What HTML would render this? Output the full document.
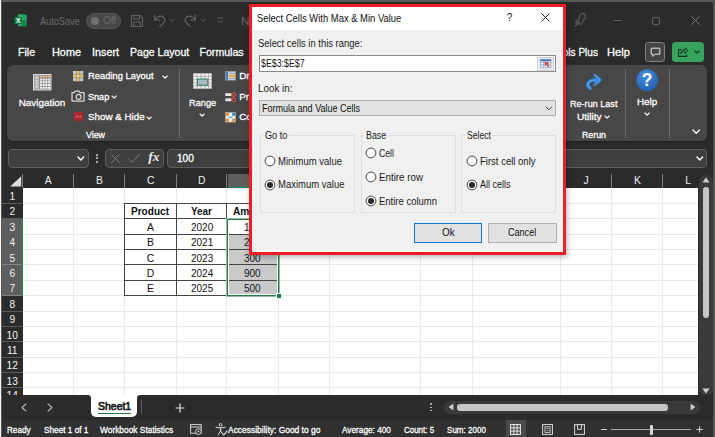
<!DOCTYPE html><html><head><meta charset="utf-8"><title>Select Cells With Max &amp; Min Value</title><style>html,body{margin:0;padding:0;}body{width:715px;height:437px;overflow:hidden;background:#2b2b2b;font-family:"Liberation Sans", sans-serif;position:relative;}div,svg,span{position:absolute;box-sizing:border-box;}.t{white-space:pre;transform-origin:0 50%;}.w{-webkit-text-stroke:.28px #fff;}svg{overflow:visible;}</style></head><body>
<div style="left:0px;top:0px;width:715px;height:2px;background:#5a5a5a;"></div>
<div style="left:713px;top:0px;width:2px;height:437px;background:#525252;"></div>
<div style="left:0px;top:0px;width:1px;height:437px;background:#f4f4f4;"></div>
<div style="left:1px;top:0px;width:1px;height:437px;background:#5a5a5a;"></div>
<svg style="left:13.8px;top:13.8px;" width="13.2" height="13.2" viewBox="0 0 15 15"><rect x="4.5" y="0.5" width="10" height="13.5" rx="1" fill="#21a366"/><rect x="4.5" y="0.5" width="5" height="6.8" fill="#33c481" opacity=".55"/><rect x="9.5" y="7.2" width="5" height="6.8" fill="#107c41" opacity=".8"/><rect x="0.5" y="3" width="8.5" height="8.5" rx="1" fill="#107c41"/><text x="4.75" y="10.1" font-family="Liberation Sans, sans-serif" font-weight="700" font-size="7.6" fill="#fff" text-anchor="middle">X</text></svg>
<span id="t0" class="t" style="left:40.30px;top:12.60px;line-height:16px;font-size:10.70px;color:#6c6c6c;transform:scaleX(0.8564);">AutoSave</span>
<div style="left:85.5px;top:12.5px;width:35px;height:16px;background:#484848;border:1px solid #565656;border-radius:8px;"></div>
<div style="left:90.5px;top:16.5px;width:8px;height:8px;background:#717171;border-radius:4px;"></div>
<span id="t1" class="t" style="left:103.00px;top:12.60px;line-height:16px;font-size:10.00px;color:#6a6a6a;transform:scaleX(0.9881);">Off</span>
<svg style="left:130px;top:13.5px;" width="14" height="14" viewBox="0 0 14 14"><path d="M1.5 1.5 H10.3 L12.5 3.7 V12.5 H1.5 Z" fill="none" stroke="#626262" stroke-width="1.1" stroke-linejoin="round"/><path d="M4 1.8 V5 H9.4 V1.8 M3.8 12.3 V8 H10.2 V12.3" fill="none" stroke="#626262" stroke-width="1.1"/></svg>
<svg style="left:152.5px;top:13px;" width="14" height="15" viewBox="0 0 14 15"><path d="M1.6 2 V7 H6.6" fill="none" stroke="#626262" stroke-width="1.2" stroke-linecap="round" stroke-linejoin="round"/><path d="M1.9 6.7 C4 3.2 8.2 2.2 10.6 4.3 C13 6.5 12.2 9.6 6.8 13.6" fill="none" stroke="#626262" stroke-width="1.2" stroke-linecap="round"/></svg>
<svg style="left:169.3px;top:18.05px;" width="6.4" height="4.3" viewBox="0 0 6.4 4.3"><path d="M1 1 L3.2 3.3 L5.4 1" fill="none" stroke="#626262" stroke-width="1" stroke-linecap="round" stroke-linejoin="round"/></svg>
<svg style="left:183px;top:13px;" width="14" height="15" viewBox="0 0 14 15"><path d="M12.4 2 V7 H7.4" fill="none" stroke="#626262" stroke-width="1.2" stroke-linecap="round" stroke-linejoin="round"/><path d="M12.1 6.7 C10 3.2 5.8 2.2 3.4 4.3 C1 6.5 1.8 9.6 7.2 13.6" fill="none" stroke="#626262" stroke-width="1.2" stroke-linecap="round"/></svg>
<svg style="left:200.3px;top:18.05px;" width="6.4" height="4.3" viewBox="0 0 6.4 4.3"><path d="M1 1 L3.2 3.3 L5.4 1" fill="none" stroke="#626262" stroke-width="1" stroke-linecap="round" stroke-linejoin="round"/></svg>
<svg style="left:216.5px;top:17px;" width="7" height="7" viewBox="0 0 7 7"><path d="M0.8 1 H6.2" stroke="#626262" stroke-width="1" stroke-linecap="round"/><path d="M1.4 3.6 L3.5 5.6 L5.6 3.6" fill="none" stroke="#626262" stroke-width="1" stroke-linecap="round" stroke-linejoin="round"/></svg>
<span id="t2" class="t" style="left:241.00px;top:12.60px;line-height:16px;font-size:10.70px;color:#6a6a6a;transform:scaleX(1.1012);">N</span>
<svg style="left:573px;top:12px;" width="15" height="16" viewBox="0 0 15 16"><path d="M9.3 1.6 C11 1.6 12.4 3 12.4 4.8 C12.4 6 11.8 7 10.8 7.6 L8.4 12 H5.6 L6.2 9 L3.6 11.6 L2.4 10.4 L6.4 6.4 C5.9 3.6 7 1.6 9.3 1.6 Z" fill="none" stroke="#5e5e5e" stroke-width="1.1" stroke-linejoin="round"/><path d="M2 14.2 L4.4 11.8" stroke="#5e5e5e" stroke-width="1.1" stroke-linecap="round"/></svg>
<div style="left:613.8px;top:19.5px;width:8.2px;height:1px;background:#626262;"></div>
<div style="left:652px;top:16.5px;width:8.4px;height:8.4px;border:1px solid #626262;border-radius:2px;"></div>
<svg style="left:690.5px;top:15.8px;" width="9" height="9" viewBox="0 0 9 9"><path d="M0.6 0.6 L8.4 8.4 M8.4 0.6 L0.6 8.4" stroke="#787878" stroke-width="1" stroke-linecap="round"/></svg>
<span id="t3" class="t w" style="left:18.40px;top:44.30px;line-height:16px;font-size:10.60px;color:#fff;transform:scaleX(0.9954);">File</span>
<span id="t4" class="t w" style="left:52.40px;top:44.30px;line-height:16px;font-size:10.60px;color:#fff;transform:scaleX(1.0260);">Home</span>
<span id="t5" class="t w" style="left:92.00px;top:44.30px;line-height:16px;font-size:10.60px;color:#fff;transform:scaleX(1.0189);">Insert</span>
<span id="t6" class="t w" style="left:129.70px;top:44.30px;line-height:16px;font-size:10.60px;color:#fff;transform:scaleX(0.9950);">Page Layout</span>
<span id="t7" class="t w" style="left:199.50px;top:44.30px;line-height:16px;font-size:10.60px;color:#fff;">Formulas</span>
<span id="t8" class="t w" style="left:542.00px;top:44.30px;line-height:16px;font-size:10.60px;color:#fff;transform:scaleX(0.9509);">Kutools Plus</span>
<span id="t9" class="t w" style="left:606.80px;top:44.30px;line-height:16px;font-size:10.60px;color:#fff;transform:scaleX(1.0460);">Help</span>
<div style="left:644.8px;top:42px;width:20.6px;height:19.5px;background:#454545;border:1px solid #858585;border-radius:3.5px;"></div>
<svg style="left:649.5px;top:46.5px;" width="11" height="11" viewBox="0 0 11 11"><path d="M1.2 1.2 H9.8 V7.2 H5 L2.8 9.4 V7.2 H1.2 Z" fill="none" stroke="#e6e6e6" stroke-width="1" stroke-linejoin="round"/></svg>
<div style="left:671.6px;top:42px;width:32.7px;height:19.5px;background:#37a35e;border-radius:3.5px;"></div>
<svg style="left:677px;top:46px;" width="12" height="12" viewBox="0 0 12 12"><path d="M4.4 3.6 H1.6 V10.4 H9.6 V8.4" fill="none" stroke="#16381f" stroke-width="1.1" stroke-linejoin="round"/><path d="M3.6 7.8 C4 5.2 5.6 4 8.2 3.9 V1.8 L11 4.6 L8.2 7.4 V5.6 C6.2 5.6 4.8 6.2 3.6 7.8 Z" fill="none" stroke="#16381f" stroke-width="1" stroke-linejoin="round"/></svg>
<svg style="left:694.1px;top:49.9px;" width="6.2" height="4.2" viewBox="0 0 6.2 4.2"><path d="M1 1 L3.1 3.2 L5.2 1" fill="none" stroke="#16381f" stroke-width="1.1" stroke-linecap="round" stroke-linejoin="round"/></svg>
<div style="left:7px;top:64.5px;width:700px;height:76.5px;background:#474747;border-radius:6px;box-shadow:0 1px 2px rgba(0,0,0,.35);"></div>
<svg style="left:33px;top:73.5px;" width="18.5" height="16.5" viewBox="0 0 18.5 16.5"><rect x="0.5" y="0.5" width="17.5" height="15.5" fill="#8e8e8e" stroke="#dedede" stroke-width="1"/><rect x="1.4" y="1.4" width="4.6" height="13.7" fill="#b4b4b4"/><path d="M3.7 3 v11" stroke="#f2f2f2" stroke-width="1.3" stroke-dasharray="1.5 1.5"/><path d="M7 2.6 H17" stroke="#f4b48a" stroke-width="2"/><path d="M7 5.6 H17 M7 8.3 H17 M7 11 H17 M7 13.7 H17" stroke="#f4f4f4" stroke-width="1.9"/><path d="M9.4 1.4 V15 M12 1.4 V15 M14.6 1.4 V15" stroke="#8e8e8e" stroke-width=".7"/></svg>
<span id="t10" class="t w" style="left:18.70px;top:94.80px;line-height:16px;font-size:9.90px;color:#fff;">Navigation</span>
<svg style="left:73.2px;top:71.4px;" width="10.2" height="10.2" viewBox="0 0 10.2 10.2"><rect x="0" y="0" width="10.2" height="10.2" fill="#c9c9c9"/><rect x="3.5" y="0" width="3.2" height="10.2" fill="#e9c35c"/><rect x="0" y="3.5" width="10.2" height="3.2" fill="#e9c35c"/><rect x="3.5" y="3.5" width="3.2" height="3.2" fill="#f6dc94"/><path d="M3.45 0 V10.2 M6.75 0 V10.2 M0 3.45 H10.2 M0 6.75 H10.2" stroke="#7e7e7e" stroke-width=".6"/></svg>
<span id="t11" class="t w" style="left:87.60px;top:68.40px;line-height:16px;font-size:9.90px;color:#fff;transform:scaleX(0.9481);">Reading Layout</span>
<svg style="left:162.4px;top:74.5px;" width="6.2" height="4.2" viewBox="0 0 6.2 4.2"><path d="M1 1 L3.1 3.2 L5.2 1" fill="none" stroke="#fff" stroke-width="1.1" stroke-linecap="round" stroke-linejoin="round"/></svg>
<svg style="left:71px;top:90.3px;" width="14" height="12" viewBox="0 0 14 12"><path d="M1 2.6 H3.2 L4.2 1 H8 L9 2.6 H13 V11 H1 Z" fill="none" stroke="#d9d9d9" stroke-width="1.25" stroke-linejoin="round"/><circle cx="7.6" cy="6.8" r="2.5" fill="none" stroke="#d9d9d9" stroke-width="1.2"/></svg>
<span id="t12" class="t w" style="left:87.60px;top:88.60px;line-height:16px;font-size:9.90px;color:#fff;transform:scaleX(0.9186);">Snap</span>
<svg style="left:110.8px;top:94.7px;" width="6.2" height="4.2" viewBox="0 0 6.2 4.2"><path d="M1 1 L3.1 3.2 L5.2 1" fill="none" stroke="#fff" stroke-width="1.1" stroke-linecap="round" stroke-linejoin="round"/></svg>
<svg style="left:73.7px;top:112.4px;" width="9" height="9" viewBox="0 0 9 9"><rect x="0" y="0" width="9" height="9" rx="1.5" fill="#ac2630"/><path d="M1.7 4.5 h1.4 M3.8 4.5 h1.4 M5.9 4.5 h1.4" stroke="#de7f86" stroke-width="1.5"/></svg>
<span id="t13" class="t w" style="left:87.60px;top:109.40px;line-height:16px;font-size:9.90px;color:#fff;transform:scaleX(0.9914);">Show &amp; Hide</span>
<svg style="left:146.1px;top:115.5px;" width="6.2" height="4.2" viewBox="0 0 6.2 4.2"><path d="M1 1 L3.1 3.2 L5.2 1" fill="none" stroke="#fff" stroke-width="1.1" stroke-linecap="round" stroke-linejoin="round"/></svg>
<span id="t14" class="t w" style="left:85.50px;top:127.00px;line-height:16px;font-size:9.60px;color:#fff;transform:scaleX(0.9212);">View</span>
<div style="left:179px;top:69px;width:1px;height:68.5px;background:#6a6a6a;"></div>
<svg style="left:193px;top:73.3px;" width="19" height="16" viewBox="0 0 19 16"><rect x="0.4" y="0.4" width="18.2" height="15.2" fill="#f4f4f4" stroke="#b5b5b5" stroke-width=".7"/><path d="M4 0.4 V15.6 M8 0.4 V15.6 M12 0.4 V15.6 M15.6 0.4 V15.6 M0.4 3.4 H18.6 M0.4 6.6 H18.6 M0.4 9.8 H18.6 M0.4 12.8 H18.6" stroke="#a2a2a2" stroke-width=".8"/><rect x="4.4" y="6" width="10.4" height="6.2" fill="#a9bccd" stroke="#2e7d4f" stroke-width="1"/></svg>
<span id="t15" class="t w" style="left:189.00px;top:94.80px;line-height:16px;font-size:9.90px;color:#fff;transform:scaleX(0.9344);">Range</span>
<svg style="left:199.3px;top:112.5px;" width="6.2" height="4.2" viewBox="0 0 6.2 4.2"><path d="M1 1 L3.1 3.2 L5.2 1" fill="none" stroke="#fff" stroke-width="1.1" stroke-linecap="round" stroke-linejoin="round"/></svg>
<svg style="left:224.5px;top:71px;" width="11" height="9.5" viewBox="0 0 11 9.5"><rect x="0.4" y="0.4" width="10.2" height="8.7" fill="#dfe6ee" stroke="#9a9a9a" stroke-width=".7"/><rect x="0.8" y="0.8" width="2.4" height="7.9" fill="#3d78b8"/><rect x="4" y="3.6" width="6.2" height="2.4" fill="#e7a43a"/><path d="M4 2.2 h6 M4 7.4 h6" stroke="#6f7f92" stroke-width=".8"/></svg>
<span id="t16" class="t w" style="left:239.20px;top:67.80px;line-height:16px;font-size:9.90px;color:#fff;">Dr</span>
<svg style="left:224.5px;top:91.5px;" width="11" height="10.5" viewBox="0 0 11 10.5"><rect x="0.3" y="1.2" width="6.2" height="2.8" fill="#e9e9e9"/><rect x="0.3" y="6.4" width="6.2" height="2.8" fill="#e9e9e9"/><circle cx="8.6" cy="2.6" r="1.9" fill="none" stroke="#e0543e" stroke-width="1.1"/><circle cx="8.6" cy="7.8" r="1.9" fill="none" stroke="#e0543e" stroke-width="1.1"/></svg>
<span id="t17" class="t w" style="left:239.20px;top:88.80px;line-height:16px;font-size:9.90px;color:#fff;">Pr</span>
<svg style="left:224.5px;top:111.5px;" width="11" height="10.5" viewBox="0 0 11 10.5"><rect x="0.4" y="0.4" width="10.2" height="9.7" fill="#eef1f5" stroke="#a0a0a0" stroke-width=".6"/><rect x="0.8" y="0.8" width="3" height="3" fill="#e9892f"/><rect x="0.8" y="6.7" width="3" height="3" fill="#e9892f"/><rect x="7.2" y="0.8" width="3" height="3" fill="#3f7fc4"/><rect x="7.2" y="6.7" width="3" height="3" fill="#e9892f"/><path d="M3.6 5.2 H7.6" stroke="#3f7fc4" stroke-width="1"/></svg>
<span id="t18" class="t w" style="left:239.20px;top:108.80px;line-height:16px;font-size:9.90px;color:#fff;">Co</span>
<svg style="left:584px;top:72.5px;" width="19" height="18" viewBox="0 0 19 18"><path d="M6.4 15.4 C1.6 12.6 3.2 6.8 12.6 7" fill="none" stroke="#2f7fdc" stroke-width="3.3" stroke-linecap="round"/><path d="M10.8 2.4 L16.2 7 L10.8 11.4" fill="none" stroke="#2f7fdc" stroke-width="3.1" stroke-linecap="round" stroke-linejoin="round"/><path d="M6.4 15.4 C1.6 12.6 3.2 6.8 12.6 7" fill="none" stroke="#6aa7ea" stroke-width="1.1" stroke-linecap="round"/><path d="M10.8 2.4 L16.2 7 L10.8 11.4" fill="none" stroke="#6aa7ea" stroke-width="1" stroke-linecap="round" stroke-linejoin="round"/></svg>
<span id="t19" class="t w" style="left:569.90px;top:96.30px;line-height:16px;font-size:9.90px;color:#fff;transform:scaleX(0.9187);">Re-run Last</span>
<span id="t20" class="t w" style="left:577.20px;top:109.00px;line-height:16px;font-size:9.90px;color:#fff;transform:scaleX(1.0190);">Utility</span>
<svg style="left:604.2px;top:114.5px;" width="6.2" height="4.2" viewBox="0 0 6.2 4.2"><path d="M1 1 L3.1 3.2 L5.2 1" fill="none" stroke="#fff" stroke-width="1.1" stroke-linecap="round" stroke-linejoin="round"/></svg>
<span id="t21" class="t w" style="left:581.50px;top:127.00px;line-height:16px;font-size:9.60px;color:#fff;transform:scaleX(0.9181);">Rerun</span>
<div style="left:625px;top:69px;width:1px;height:68.5px;background:#6a6a6a;"></div>
<svg style="left:636px;top:69.3px;" width="22.4" height="22.4" viewBox="0 0 22.4 22.4"><defs><radialGradient id="hg" cx="40%" cy="30%" r="75%"><stop offset="0" stop-color="#4a8fdc"/><stop offset="1" stop-color="#1d5fae"/></radialGradient></defs><circle cx="11.2" cy="11.2" r="10.9" fill="url(#hg)"/><text x="11.2" y="17.4" font-family="Liberation Sans, sans-serif" font-weight="700" font-size="17.5" fill="#fff" text-anchor="middle">?</text></svg>
<span id="t22" class="t w" style="left:637.20px;top:93.80px;line-height:16px;font-size:9.90px;color:#fff;transform:scaleX(0.9945);">Help</span>
<svg style="left:644.1px;top:111.5px;" width="6.2" height="4.2" viewBox="0 0 6.2 4.2"><path d="M1 1 L3.1 3.2 L5.2 1" fill="none" stroke="#fff" stroke-width="1.1" stroke-linecap="round" stroke-linejoin="round"/></svg>
<div style="left:669px;top:69px;width:1px;height:68.5px;background:#6a6a6a;"></div>
<svg style="left:692.2px;top:129.0px;" width="8.4" height="5.2" viewBox="0 0 8.4 5.2"><path d="M1 1 L4.2 4.2 L7.4 1" fill="none" stroke="#fff" stroke-width="1.3" stroke-linecap="round" stroke-linejoin="round"/></svg>
<div style="left:7.5px;top:148.5px;width:81.5px;height:19.5px;background:#3f3f3f;border:1px solid #5f5f5f;border-radius:4px;"></div>
<svg style="left:76.8px;top:156.1px;" width="7.6" height="5" viewBox="0 0 7.6 5"><path d="M1 1 L3.8 4 L6.6 1" fill="none" stroke="#fff" stroke-width="1.4" stroke-linecap="round" stroke-linejoin="round"/></svg>
<div style="left:96px;top:153.6px;width:2px;height:2px;background:#dadada;border-radius:1px;"></div>
<div style="left:96px;top:157.4px;width:2px;height:2px;background:#dadada;border-radius:1px;"></div>
<div style="left:96px;top:161.2px;width:2px;height:2px;background:#dadada;border-radius:1px;"></div>
<div style="left:104.5px;top:148.5px;width:59.5px;height:19.5px;background:#3f3f3f;border:1px solid #5f5f5f;border-radius:4px;"></div>
<svg style="left:110.5px;top:153.5px;" width="9" height="9" viewBox="0 0 9 9"><path d="M0.6 0.6 L8.4 8.4 M8.4 0.6 L0.6 8.4" stroke="#7c7c7c" stroke-width="1" stroke-linecap="round"/></svg>
<svg style="left:128px;top:153.5px;" width="12" height="9" viewBox="0 0 12 9"><path d="M0.8 5 L4 8.2 L11.2 0.8" fill="none" stroke="#7c7c7c" stroke-width="1" stroke-linecap="round" stroke-linejoin="round"/></svg>
<span id="t23" class="t" style="left:148.30px;top:149.20px;line-height:16px;font-size:13.50px;color:#ececec;font-family:'Liberation Serif', serif;font-style:italic;font-weight:700;">fx</span>
<div style="left:167px;top:148.5px;width:539.5px;height:19.5px;background:#3f3f3f;border:1px solid #5f5f5f;border-radius:4px;"></div>
<span id="t24" class="t w" style="left:176.60px;top:151.40px;line-height:16px;font-size:10.20px;color:#fff;transform:scaleX(0.9882);">100</span>
<svg style="left:696.0px;top:155.9px;" width="7.6" height="5" viewBox="0 0 7.6 5"><path d="M1 1 L3.8 4 L6.6 1" fill="none" stroke="#fff" stroke-width="1.4" stroke-linecap="round" stroke-linejoin="round"/></svg>
<div style="left:2px;top:173.5px;width:695.5px;height:222.5px;background:#ffffff;"></div>
<div style="left:2px;top:173.5px;width:695.5px;height:14.5px;background:#2b2b2b;"></div>
<div style="left:2px;top:173.5px;width:20.5px;height:222.5px;background:#2b2b2b;"></div>
<div style="left:73px;top:188px;width:1px;height:208px;background:#eaeaea;"></div>
<div style="left:124px;top:188px;width:1px;height:208px;background:#eaeaea;"></div>
<div style="left:176px;top:188px;width:1px;height:208px;background:#eaeaea;"></div>
<div style="left:226px;top:188px;width:1px;height:208px;background:#eaeaea;"></div>
<div style="left:278px;top:188px;width:1px;height:208px;background:#eaeaea;"></div>
<div style="left:329px;top:188px;width:1px;height:208px;background:#eaeaea;"></div>
<div style="left:420px;top:188px;width:1px;height:208px;background:#eaeaea;"></div>
<div style="left:472px;top:188px;width:1px;height:208px;background:#eaeaea;"></div>
<div style="left:560px;top:188px;width:1px;height:208px;background:#eaeaea;"></div>
<div style="left:611px;top:188px;width:1px;height:208px;background:#eaeaea;"></div>
<div style="left:662px;top:188px;width:1px;height:208px;background:#eaeaea;"></div>
<div style="left:22.5px;top:203px;width:675px;height:1px;background:#eaeaea;"></div>
<div style="left:22.5px;top:218px;width:675px;height:1px;background:#eaeaea;"></div>
<div style="left:22.5px;top:234px;width:675px;height:1px;background:#eaeaea;"></div>
<div style="left:22.5px;top:249px;width:675px;height:1px;background:#eaeaea;"></div>
<div style="left:22.5px;top:264px;width:675px;height:1px;background:#eaeaea;"></div>
<div style="left:22.5px;top:280px;width:675px;height:1px;background:#eaeaea;"></div>
<div style="left:22.5px;top:295px;width:675px;height:1px;background:#eaeaea;"></div>
<div style="left:22.5px;top:311px;width:675px;height:1px;background:#eaeaea;"></div>
<div style="left:22.5px;top:326px;width:675px;height:1px;background:#eaeaea;"></div>
<div style="left:22.5px;top:341px;width:675px;height:1px;background:#eaeaea;"></div>
<div style="left:22.5px;top:357px;width:675px;height:1px;background:#eaeaea;"></div>
<div style="left:22.5px;top:372px;width:675px;height:1px;background:#eaeaea;"></div>
<div style="left:22.5px;top:387px;width:675px;height:1px;background:#eaeaea;"></div>
<div style="left:73px;top:174px;width:1px;height:14px;background:#7c7c7c;"></div>
<div style="left:124px;top:174px;width:1px;height:14px;background:#7c7c7c;"></div>
<div style="left:176px;top:174px;width:1px;height:14px;background:#7c7c7c;"></div>
<div style="left:226px;top:174px;width:1px;height:14px;background:#7c7c7c;"></div>
<div style="left:278px;top:174px;width:1px;height:14px;background:#7c7c7c;"></div>
<div style="left:329px;top:174px;width:1px;height:14px;background:#7c7c7c;"></div>
<div style="left:420px;top:174px;width:1px;height:14px;background:#7c7c7c;"></div>
<div style="left:472px;top:174px;width:1px;height:14px;background:#7c7c7c;"></div>
<div style="left:560px;top:174px;width:1px;height:14px;background:#7c7c7c;"></div>
<div style="left:611px;top:174px;width:1px;height:14px;background:#7c7c7c;"></div>
<div style="left:662px;top:174px;width:1px;height:14px;background:#7c7c7c;"></div>
<div style="left:22px;top:174px;width:1px;height:14px;background:#7c7c7c;"></div>
<span id="t25" class="t" style="left:44.80px;top:173.20px;line-height:16px;font-size:10.40px;color:#f0f0f0;width:6.8px;text-align:center;">A</span>
<span id="t26" class="t" style="left:96.00px;top:173.20px;line-height:16px;font-size:10.40px;color:#f0f0f0;width:6.8px;text-align:center;">B</span>
<span id="t27" class="t" style="left:147.00px;top:173.20px;line-height:16px;font-size:10.40px;color:#f0f0f0;width:6.8px;text-align:center;">C</span>
<span id="t28" class="t" style="left:198.10px;top:173.20px;line-height:16px;font-size:10.40px;color:#f0f0f0;width:6.8px;text-align:center;">D</span>
<span id="t29" class="t" style="left:582.80px;top:173.20px;line-height:16px;font-size:10.40px;color:#f0f0f0;width:6.8px;text-align:center;">J</span>
<span id="t30" class="t" style="left:634.00px;top:173.20px;line-height:16px;font-size:10.40px;color:#f0f0f0;width:6.8px;text-align:center;">K</span>
<span id="t31" class="t" style="left:684.80px;top:173.20px;line-height:16px;font-size:10.40px;color:#f0f0f0;width:6.8px;text-align:center;">L</span>
<div style="left:227.5px;top:173.5px;width:51px;height:14.5px;background:#5e5e5e;"></div>
<div style="left:227.5px;top:187px;width:51px;height:1px;background:#1e8a4c;"></div>
<svg style="left:10px;top:176px;" width="11.4" height="10.6" viewBox="0 0 11.4 10.6"><path d="M11.2 0.2 V10.4 H0.2 Z" fill="#dedede"/></svg>
<div style="left:2px;top:203px;width:20.5px;height:1px;background:#5a5a5a;"></div>
<span id="t32" class="t" style="left:9.40px;top:189.00px;line-height:16px;font-size:10.20px;color:#f4f4f4;width:5.6px;text-align:center;">1</span>
<div style="left:2px;top:218px;width:20.5px;height:1px;background:#5a5a5a;"></div>
<span id="t33" class="t" style="left:9.40px;top:204.39px;line-height:16px;font-size:10.20px;color:#f4f4f4;width:5.6px;text-align:center;">2</span>
<div style="left:2px;top:219px;width:20.5px;height:15px;background:#5e5e5e;"></div>
<div style="left:2px;top:234px;width:20.5px;height:1px;background:#858585;"></div>
<span id="t34" class="t" style="left:9.40px;top:219.78px;line-height:16px;font-size:10.20px;color:#f4f4f4;width:5.6px;text-align:center;">3</span>
<div style="left:2px;top:234px;width:20.5px;height:15px;background:#5e5e5e;"></div>
<div style="left:2px;top:249px;width:20.5px;height:1px;background:#858585;"></div>
<span id="t35" class="t" style="left:9.40px;top:235.16px;line-height:16px;font-size:10.20px;color:#f4f4f4;width:5.6px;text-align:center;">4</span>
<div style="left:2px;top:249px;width:20.5px;height:16px;background:#5e5e5e;"></div>
<div style="left:2px;top:264px;width:20.5px;height:1px;background:#858585;"></div>
<span id="t36" class="t" style="left:9.40px;top:250.56px;line-height:16px;font-size:10.20px;color:#f4f4f4;width:5.6px;text-align:center;">5</span>
<div style="left:2px;top:265px;width:20.5px;height:15px;background:#5e5e5e;"></div>
<div style="left:2px;top:280px;width:20.5px;height:1px;background:#858585;"></div>
<span id="t37" class="t" style="left:9.40px;top:265.94px;line-height:16px;font-size:10.20px;color:#f4f4f4;width:5.6px;text-align:center;">6</span>
<div style="left:2px;top:280px;width:20.5px;height:16px;background:#5e5e5e;"></div>
<div style="left:2px;top:295px;width:20.5px;height:1px;background:#858585;"></div>
<span id="t38" class="t" style="left:9.40px;top:281.33px;line-height:16px;font-size:10.20px;color:#f4f4f4;width:5.6px;text-align:center;">7</span>
<div style="left:2px;top:311px;width:20.5px;height:1px;background:#5a5a5a;"></div>
<span id="t39" class="t" style="left:9.40px;top:296.72px;line-height:16px;font-size:10.20px;color:#f4f4f4;width:5.6px;text-align:center;">8</span>
<div style="left:2px;top:326px;width:20.5px;height:1px;background:#5a5a5a;"></div>
<span id="t40" class="t" style="left:9.40px;top:312.11px;line-height:16px;font-size:10.20px;color:#f4f4f4;width:5.6px;text-align:center;">9</span>
<div style="left:2px;top:341px;width:20.5px;height:1px;background:#5a5a5a;"></div>
<span id="t41" class="t" style="left:6.60px;top:327.50px;line-height:16px;font-size:10.20px;color:#f4f4f4;width:11.2px;text-align:center;">10</span>
<div style="left:2px;top:357px;width:20.5px;height:1px;background:#5a5a5a;"></div>
<span id="t42" class="t" style="left:6.60px;top:342.89px;line-height:16px;font-size:10.20px;color:#f4f4f4;width:11.2px;text-align:center;">11</span>
<div style="left:2px;top:372px;width:20.5px;height:1px;background:#5a5a5a;"></div>
<span id="t43" class="t" style="left:6.60px;top:358.29px;line-height:16px;font-size:10.20px;color:#f4f4f4;width:11.2px;text-align:center;">12</span>
<div style="left:2px;top:387px;width:20.5px;height:1px;background:#5a5a5a;"></div>
<span id="t44" class="t" style="left:6.60px;top:373.68px;line-height:16px;font-size:10.20px;color:#f4f4f4;width:11.2px;text-align:center;">13</span>
<div style="left:2px;top:388.97px;width:20.5px;height:6.53px;overflow:hidden;"><span class="t" style="left:4.6px;top:-1.2px;line-height:16px;font-size:10.2px;color:#f4f4f4;">14</span></div>
<div style="left:22px;top:219px;width:1px;height:77px;background:#1e8a4c;"></div>
<div style="left:229px;top:235px;width:48px;height:59px;background:#c9c9c9;"></div>
<div style="left:124px;top:203px;width:155px;height:1px;background:#444444;"></div>
<div style="left:124px;top:218px;width:155px;height:1px;background:#444444;"></div>
<div style="left:124px;top:234px;width:155px;height:1px;background:#444444;"></div>
<div style="left:124px;top:249px;width:155px;height:1px;background:#444444;"></div>
<div style="left:124px;top:264px;width:155px;height:1px;background:#444444;"></div>
<div style="left:124px;top:280px;width:155px;height:1px;background:#444444;"></div>
<div style="left:124px;top:295px;width:155px;height:1px;background:#444444;"></div>
<div style="left:124px;top:203px;width:1px;height:93px;background:#444444;"></div>
<div style="left:176px;top:203px;width:1px;height:93px;background:#444444;"></div>
<div style="left:226px;top:203px;width:1px;height:93px;background:#444444;"></div>
<div style="left:278px;top:203px;width:1px;height:93px;background:#444444;"></div>
<div style="left:226px;top:218px;width:1px;height:79px;background:#fff;"></div>
<div style="left:226px;top:218px;width:54px;height:1px;background:#fff;"></div>
<div style="left:226px;top:218px;width:54px;height:79px;border:1px solid rgba(31,122,69,.5);"></div>
<div style="left:227px;top:219px;width:52px;height:77px;border:1px solid #1f7a45;"></div>
<div style="left:228px;top:220px;width:50px;height:75px;border:1px solid #fff;border-top:0;"></div>
<div style="left:276px;top:293px;width:5px;height:5px;background:#fff;"></div>
<div style="left:277px;top:294px;width:4px;height:4px;background:#1f7a45;"></div>
<span id="t45" class="t" style="left:131.40px;top:204.39px;line-height:16px;font-size:10.40px;color:#111;font-weight:700;transform:scaleX(0.9678);">Product</span>
<span id="t46" class="t" style="left:191.10px;top:204.39px;line-height:16px;font-size:10.40px;color:#111;font-weight:700;transform:scaleX(0.9559);">Year</span>
<span id="t47" class="t" style="left:233.35px;top:204.39px;line-height:16px;font-size:10.40px;color:#111;font-weight:700;transform:scaleX(0.9809);">Amount</span>
<span id="t48" class="t" style="left:146.40px;top:219.78px;line-height:16px;font-size:10.40px;color:#111;width:8px;text-align:center;">A</span>
<span id="t49" class="t" style="left:190.50px;top:219.78px;line-height:16px;font-size:10.20px;color:#111;transform:scaleX(0.9792);">2020</span>
<span id="t50" class="t" style="left:244.28px;top:219.78px;line-height:16px;font-size:10.20px;color:#111;transform:scaleX(0.9794);">100</span>
<span id="t51" class="t" style="left:146.40px;top:235.16px;line-height:16px;font-size:10.40px;color:#111;width:8px;text-align:center;">B</span>
<span id="t52" class="t" style="left:190.50px;top:235.16px;line-height:16px;font-size:10.20px;color:#111;transform:scaleX(0.9792);">2021</span>
<span id="t53" class="t" style="left:244.28px;top:235.16px;line-height:16px;font-size:10.20px;color:#111;transform:scaleX(0.9794);">200</span>
<span id="t54" class="t" style="left:146.40px;top:250.56px;line-height:16px;font-size:10.40px;color:#111;width:8px;text-align:center;">C</span>
<span id="t55" class="t" style="left:190.50px;top:250.56px;line-height:16px;font-size:10.20px;color:#111;transform:scaleX(0.9792);">2023</span>
<span id="t56" class="t" style="left:244.28px;top:250.56px;line-height:16px;font-size:10.20px;color:#111;transform:scaleX(0.9794);">300</span>
<span id="t57" class="t" style="left:146.40px;top:265.94px;line-height:16px;font-size:10.40px;color:#111;width:8px;text-align:center;">D</span>
<span id="t58" class="t" style="left:190.50px;top:265.94px;line-height:16px;font-size:10.20px;color:#111;transform:scaleX(0.9792);">2024</span>
<span id="t59" class="t" style="left:244.28px;top:265.94px;line-height:16px;font-size:10.20px;color:#111;transform:scaleX(0.9794);">900</span>
<span id="t60" class="t" style="left:146.40px;top:281.33px;line-height:16px;font-size:10.40px;color:#111;width:8px;text-align:center;">E</span>
<span id="t61" class="t" style="left:190.50px;top:281.33px;line-height:16px;font-size:10.20px;color:#111;transform:scaleX(0.9792);">2025</span>
<span id="t62" class="t" style="left:244.28px;top:281.33px;line-height:16px;font-size:10.20px;color:#111;transform:scaleX(0.9794);">500</span>
<div style="left:697.5px;top:173.5px;width:15.5px;height:222.5px;background:#2b2b2b;"></div>
<div style="left:699px;top:174.5px;width:13.5px;height:221.5px;background:#3a3a3a;border-radius:7px;"></div>
<svg style="left:701.5px;top:177px;" width="8" height="6" viewBox="0 0 8 6"><path d="M4 0.6 L7.6 5.4 H0.4 Z" fill="#cfcfcf"/></svg>
<div style="left:702.5px;top:187px;width:6px;height:131px;background:#c6c6c6;border-radius:3px;"></div>
<svg style="left:701.5px;top:388px;" width="8" height="6" viewBox="0 0 8 6"><path d="M4 5.4 L7.6 0.6 H0.4 Z" fill="#cfcfcf"/></svg>
<div style="left:2px;top:395px;width:711px;height:25.5px;background:#2b2b2b;"></div>
<div style="left:2px;top:420px;width:711px;height:17px;background:#313131;"></div>
<svg style="left:20.5px;top:402.8px;" width="6" height="9" viewBox="0 0 6 9"><path d="M5 0.8 L1 4.5 L5 8.2" fill="none" stroke="#bdbdbd" stroke-width="1.1" stroke-linecap="round" stroke-linejoin="round"/></svg>
<svg style="left:47px;top:402.8px;" width="6" height="9" viewBox="0 0 6 9"><path d="M1 0.8 L5 4.5 L1 8.2" fill="none" stroke="#bdbdbd" stroke-width="1.1" stroke-linecap="round" stroke-linejoin="round"/></svg>
<div style="left:91.3px;top:395px;width:45.7px;height:22px;background:#ffffff;border-radius:0 0 5px 5px;"></div>
<svg style="left:88.3px;top:395px;" width="3" height="3" viewBox="0 0 3 3"><path d="M0 0 H3 V3 C3 1.2 1.8 0 0 0 Z" fill="#fff"/></svg>
<svg style="left:137px;top:395px;" width="3" height="3" viewBox="0 0 3 3"><path d="M3 0 H0 V3 C0 1.2 1.2 0 3 0 Z" fill="#fff"/></svg>
<span id="t63" class="t" style="left:97.80px;top:397.80px;line-height:16px;font-size:11.40px;color:#1a1a1a;transform:scaleX(0.9194);-webkit-text-stroke:.7px #1a1a1a;">Sheet1</span>
<div style="left:98px;top:412.5px;width:33px;height:1.3px;background:#1c7c44;"></div>
<div style="left:141px;top:400px;width:1px;height:14px;background:#626262;"></div>
<svg style="left:174.5px;top:402.5px;" width="10" height="10" viewBox="0 0 10 10"><path d="M5 0.6 V9.4 M0.6 5 H9.4" stroke="#e2e2e2" stroke-width="1.2"/></svg>
<div style="left:430px;top:403.4px;width:1.6px;height:1.6px;background:#d0d0d0;border-radius:1px;"></div>
<div style="left:430px;top:406.6px;width:1.6px;height:1.6px;background:#d0d0d0;border-radius:1px;"></div>
<div style="left:430px;top:409.8px;width:1.6px;height:1.6px;background:#d0d0d0;border-radius:1px;"></div>
<div style="left:444px;top:400.5px;width:256px;height:13.5px;background:#393939;border-radius:7px;"></div>
<svg style="left:447.5px;top:403px;" width="6" height="8" viewBox="0 0 6 8"><path d="M0.6 4 L5.4 0.4 V7.6 Z" fill="#cfcfcf"/></svg>
<svg style="left:689.5px;top:403px;" width="6" height="8" viewBox="0 0 6 8"><path d="M5.4 4 L0.6 0.4 V7.6 Z" fill="#cfcfcf"/></svg>
<div style="left:457px;top:404px;width:210.5px;height:6.5px;background:#c6c6c6;border-radius:3.2px;"></div>
<span id="t64" class="t w" style="left:7.40px;top:421.70px;line-height:16px;font-size:9.00px;color:#fff;transform:scaleX(0.9033);">Ready</span>
<span id="t65" class="t w" style="left:43.60px;top:421.70px;line-height:16px;font-size:9.00px;color:#fff;transform:scaleX(0.9146);">Sheet 1 of 1</span>
<span id="t66" class="t w" style="left:100.00px;top:421.70px;line-height:16px;font-size:9.00px;color:#fff;transform:scaleX(0.9293);">Workbook Statistics</span>
<svg style="left:189.5px;top:424px;" width="12.5" height="11.5" viewBox="0 0 12.5 11.5"><rect x="0.6" y="0.6" width="10.6" height="8.6" fill="none" stroke="#d6d6d6" stroke-width="1"/><path d="M0.6 3 H11.2" stroke="#d6d6d6" stroke-width="1"/><circle cx="8.4" cy="7.6" r="2.9" fill="#313131" stroke="#d6d6d6" stroke-width="1"/><circle cx="8.4" cy="7.6" r="1" fill="#d6d6d6"/></svg>
<svg style="left:214.5px;top:423.3px;" width="12.5" height="12.5" viewBox="0 0 12.5 12.5"><circle cx="5.6" cy="1.8" r="1.3" fill="none" stroke="#e4e4e4" stroke-width=".9"/><path d="M1 4.2 C4 5.2 7.2 5.2 10.2 4.2 M5.6 5 V8 M5.6 8 L3 11.8 M5.6 8 L6.6 9.6" fill="none" stroke="#e4e4e4" stroke-width="1" stroke-linecap="round"/><path d="M7.2 10.2 L8.8 11.8 L12 8" fill="none" stroke="#e4e4e4" stroke-width="1.1" stroke-linecap="round" stroke-linejoin="round"/></svg>
<span id="t67" class="t w" style="left:228.00px;top:421.70px;line-height:16px;font-size:9.00px;color:#fff;transform:scaleX(0.9375);">Accessibility: Good to go</span>
<span id="t68" class="t w" style="left:342.00px;top:421.70px;line-height:16px;font-size:9.00px;color:#fff;transform:scaleX(0.9159);">Average: 400</span>
<span id="t69" class="t w" style="left:404.40px;top:421.70px;line-height:16px;font-size:9.00px;color:#fff;transform:scaleX(0.8845);">Count: 5</span>
<span id="t70" class="t w" style="left:447.00px;top:421.70px;line-height:16px;font-size:9.00px;color:#fff;transform:scaleX(0.8959);">Sum: 2000</span>
<div style="left:505.5px;top:420px;width:20px;height:17px;background:#4a4a4a;"></div>
<svg style="left:510px;top:423.5px;" width="11" height="11" viewBox="0 0 11 11"><rect x="0.6" y="0.6" width="9.8" height="9.8" fill="none" stroke="#f0f0f0" stroke-width="1"/><path d="M3.9 0.6 V10.4 M7.1 0.6 V10.4 M0.6 3.9 H10.4 M0.6 7.1 H10.4" stroke="#f0f0f0" stroke-width=".9"/></svg>
<svg style="left:542.3px;top:423.5px;" width="11" height="11" viewBox="0 0 11 11"><rect x="0.6" y="0.6" width="9.8" height="9.8" fill="none" stroke="#dcdcdc" stroke-width="1"/><rect x="3" y="2.8" width="5" height="5.6" fill="none" stroke="#dcdcdc" stroke-width=".9"/><path d="M4.4 4.6 h2.2 M4.4 6.4 h2.2" stroke="#dcdcdc" stroke-width=".7"/></svg>
<svg style="left:574.3px;top:423.5px;" width="11" height="11" viewBox="0 0 11 11"><rect x="0.6" y="0.6" width="9.8" height="9.8" fill="none" stroke="#dcdcdc" stroke-width="1"/><path d="M3.6 0.6 V5.4 H7.4 V0.6" fill="none" stroke="#dcdcdc" stroke-width="1"/></svg>
<div style="left:600.5px;top:429.3px;width:6px;height:1px;background:#d0d0d0;"></div>
<div style="left:610.5px;top:429.3px;width:80.5px;height:1px;background:#a8a8a8;"></div>
<div style="left:649.5px;top:424.5px;width:3px;height:10.5px;background:#d8d8d8;border-radius:1px;"></div>
<svg style="left:695.5px;top:426.3px;" width="7" height="7" viewBox="0 0 7 7"><path d="M3.5 0.4 V6.6 M0.4 3.5 H6.6" stroke="#d0d0d0" stroke-width="1"/></svg>
<div style="left:249px;top:4px;width:317px;height:251px;background:#f0f0f0;border:3px solid #ee1c25;box-shadow:1px 2px 6px rgba(0,0,0,.30);"></div>
<div style="left:252px;top:250px;width:311px;height:2px;background:#fbfbfb;"></div>
<div style="left:561.5px;top:7px;width:1.5px;height:245px;background:#fafafa;"></div>
<div style="left:252px;top:7px;width:311px;height:22.5px;background:#ffffff;"></div>
<span id="t71" class="t" style="left:257.00px;top:11.40px;line-height:16px;font-size:10.30px;color:#101010;transform:scaleX(0.9147);">Select Cells With Max &amp; Min Value</span>
<span id="t72" class="t" style="left:506.80px;top:10.40px;line-height:16px;font-size:10.00px;color:#222;">?</span>
<svg style="left:541px;top:13.2px;" width="9" height="9" viewBox="0 0 9 9"><path d="M0.4 0.4 L8.6 8.6 M8.6 0.4 L0.4 8.6" stroke="#222" stroke-width="1"/></svg>
<span id="t73" class="t" style="left:258.00px;top:35.90px;line-height:16px;font-size:10.30px;color:#1a1a1a;transform:scaleX(0.9157);">Select cells in this range:</span>
<div style="left:258.5px;top:55px;width:297.5px;height:17px;background:#ffffff;border:1px solid #8a8a8a;"></div>
<span id="t74" class="t" style="left:260.90px;top:56.40px;line-height:16px;font-size:10.30px;color:#111;transform:scaleX(0.8574);">$E$3:$E$7</span>
<div style="left:536.8px;top:56.5px;width:17px;height:14.5px;background:#ececec;border:1px solid #cfcfcf;"></div>
<svg style="left:539.6px;top:58.8px;" width="11.5" height="9.4" viewBox="0 0 11.5 9.4"><rect x="0.4" y="0.4" width="10.6" height="8.4" fill="#f4f7fb" stroke="#8aa0c2" stroke-width=".7"/><path d="M0.4 3.1 H11 M0.4 6 H11 M3.8 0.4 V8.8 M7.4 0.4 V8.8" stroke="#5f86c4" stroke-width=".7"/><rect x="0.4" y="0.4" width="10.6" height="1.6" fill="#4a78c0"/><path d="M4.4 2.6 L9.4 4.2 L7.6 5 L9.6 7.2 L8.6 8 L6.8 5.8 L5.6 7.2 Z" fill="#e03a2f"/></svg>
<span id="t75" class="t" style="left:258.00px;top:81.00px;line-height:16px;font-size:10.30px;color:#1a1a1a;transform:scaleX(0.9563);">Look in:</span>
<div style="left:258.5px;top:100px;width:297.5px;height:16px;background:#e2e2e2;border:1px solid #adadad;"></div>
<span id="t76" class="t" style="left:261.50px;top:101.00px;line-height:16px;font-size:10.30px;color:#111;transform:scaleX(0.8760);">Formula and Value Cells</span>
<svg style="left:544.9px;top:106.2px;" width="7.6" height="4.8" viewBox="0 0 7.6 4.8"><path d="M1 1 L3.8 3.8 L6.6 1" fill="none" stroke="#444" stroke-width="1" stroke-linecap="round" stroke-linejoin="round"/></svg>
<div style="left:260px;top:135.2px;width:94.5px;height:77.80000000000001px;border:1px solid #dedede;"></div>
<div style="left:262.6px;top:133.2px;width:26.399999999999977px;height:5px;background:#f0f0f0;"></div>
<span id="t77" class="t" style="left:264.60px;top:128.40px;line-height:16px;font-size:10.30px;color:#1a1a1a;transform:scaleX(0.8893);">Go to</span>
<div style="left:360.5px;top:135.2px;width:95.5px;height:77.80000000000001px;border:1px solid #dedede;"></div>
<div style="left:363.8px;top:133.2px;width:24.19999999999999px;height:5px;background:#f0f0f0;"></div>
<span id="t78" class="t" style="left:365.80px;top:128.40px;line-height:16px;font-size:10.30px;color:#1a1a1a;transform:scaleX(0.8601);">Base</span>
<div style="left:461px;top:135.2px;width:95.29999999999995px;height:77.80000000000001px;border:1px solid #dedede;"></div>
<div style="left:464.6px;top:133.2px;width:27.899999999999977px;height:5px;background:#f0f0f0;"></div>
<span id="t79" class="t" style="left:466.60px;top:128.40px;line-height:16px;font-size:10.30px;color:#1a1a1a;transform:scaleX(0.8349);">Select</span>
<svg style="left:263px;top:154.2px;" width="14" height="14" viewBox="0 0 14 14"><circle cx="7" cy="7" r="4.9" fill="#fff" stroke="#333" stroke-width=".9"/></svg>
<span id="t80" class="t" style="left:278.00px;top:153.60px;line-height:16px;font-size:10.30px;color:#1a1a1a;transform:scaleX(0.9242);">Minimum value</span>
<svg style="left:263px;top:177.7px;" width="14" height="14" viewBox="0 0 14 14"><circle cx="7" cy="7" r="4.9" fill="#fff" stroke="#333" stroke-width=".9"/><circle cx="7" cy="7" r="3.05" fill="#2a2a2a"/></svg>
<span id="t81" class="t" style="left:278.00px;top:177.10px;line-height:16px;font-size:10.30px;color:#1a1a1a;transform:scaleX(0.9222);">Maximum value</span>
<svg style="left:363.7px;top:146.2px;" width="14" height="14" viewBox="0 0 14 14"><circle cx="7" cy="7" r="4.9" fill="#fff" stroke="#333" stroke-width=".9"/></svg>
<span id="t82" class="t" style="left:378.50px;top:145.60px;line-height:16px;font-size:10.30px;color:#1a1a1a;transform:scaleX(0.8451);">Cell</span>
<svg style="left:363.7px;top:170.2px;" width="14" height="14" viewBox="0 0 14 14"><circle cx="7" cy="7" r="4.9" fill="#fff" stroke="#333" stroke-width=".9"/></svg>
<span id="t83" class="t" style="left:378.50px;top:169.60px;line-height:16px;font-size:10.30px;color:#1a1a1a;transform:scaleX(0.9491);">Entire row</span>
<svg style="left:363.7px;top:194.2px;" width="14" height="14" viewBox="0 0 14 14"><circle cx="7" cy="7" r="4.9" fill="#fff" stroke="#333" stroke-width=".9"/><circle cx="7" cy="7" r="3.05" fill="#2a2a2a"/></svg>
<span id="t84" class="t" style="left:378.50px;top:193.60px;line-height:16px;font-size:10.30px;color:#1a1a1a;transform:scaleX(0.9213);">Entire column</span>
<svg style="left:465px;top:154.2px;" width="14" height="14" viewBox="0 0 14 14"><circle cx="7" cy="7" r="4.9" fill="#fff" stroke="#333" stroke-width=".9"/></svg>
<span id="t85" class="t" style="left:480.00px;top:153.60px;line-height:16px;font-size:10.30px;color:#1a1a1a;transform:scaleX(0.9238);">First cell only</span>
<svg style="left:465px;top:177.7px;" width="14" height="14" viewBox="0 0 14 14"><circle cx="7" cy="7" r="4.9" fill="#fff" stroke="#333" stroke-width=".9"/><circle cx="7" cy="7" r="3.05" fill="#2a2a2a"/></svg>
<span id="t86" class="t" style="left:480.00px;top:177.10px;line-height:16px;font-size:10.30px;color:#1a1a1a;transform:scaleX(0.8738);">All cells</span>
<div style="left:414px;top:222.5px;width:68px;height:20px;background:#e1e1e1;border:1.6px solid #0a78d6;"></div>
<span id="t87" class="t" style="left:441.80px;top:225.00px;line-height:16px;font-size:10.30px;color:#111;transform:scaleX(0.9642);">Ok</span>
<div style="left:488px;top:222.5px;width:69px;height:20px;background:#e1e1e1;border:1px solid #adadad;"></div>
<span id="t88" class="t" style="left:508.30px;top:225.00px;line-height:16px;font-size:10.30px;color:#111;transform:scaleX(0.8795);">Cancel</span>
</body></html>
